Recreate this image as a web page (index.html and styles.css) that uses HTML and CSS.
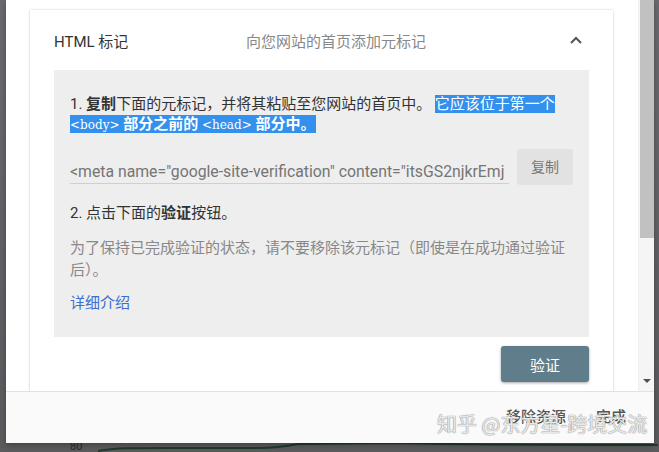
FILE: index.html
```html
<!DOCTYPE html>
<html lang="zh-CN">
<head>
<meta charset="utf-8">
<title>HTML 标记</title>
<link rel="stylesheet" href="styles.css">
</head>
<body>
<div class="backdrop">
  <span class="axis-label">80</span>
  <svg class="chart-line" width="560" height="10" viewBox="0 0 560 10">
    <path d="M0 9 C20 5 40 6 130 6 L160 6 C180 6 190 4 200 2 L300 1 C340 2 400 3 560 3" fill="none" stroke="#1f3b2b" stroke-width="2"/>
  </svg>
</div>

<div class="dialog">
  <div class="scroll-area">
    <div class="scroll-content">
      <section class="card">
        <header class="card-header">
          <span class="card-title">HTML 标记</span>
          <span class="card-desc">向您网站的首页添加元标记</span>
          <svg class="chevron" width="14" height="10" viewBox="0 0 14 10">
            <polyline points="2,8 7,3 12,8" fill="none" stroke="#555" stroke-width="2"/>
          </svg>
        </header>
        <div class="card-body">
          <div class="steps">
            <p class="step">1. <b>复制</b>下面的元标记，并将其粘贴至您网站的首页中。 <span class="sel">它应该位于第一个 <code>&lt;body&gt;</code> <b>部分之前的</b> <code>&lt;head&gt;</code> <b>部分中。</b></span></p>
            <div class="meta-row">
              <div class="meta-field">&lt;meta name="google-site-verification" content="itsGS2njkrEmj</div>
              <button class="copy-btn">复制</button>
            </div>
            <p class="step step-2">2. 点击下面的<b>验证</b>按钮。</p>
            <p class="note">为了保持已完成验证的状态，请不要移除该元标记（即使是在成功通过验证后）。</p>
            <a class="more" href="#">详细介绍</a>
          </div>
          <div class="actions">
            <button class="verify-btn">验证</button>
          </div>
        </div>
      </section>
    </div>
    <div class="scrollbar">
      <div class="thumb"></div>
      <div class="track"></div>
      <svg class="arrow" width="8" height="5" viewBox="0 0 8 5"><polygon points="0,0 8,0 4,4" fill="#505050"/></svg>
    </div>
  </div>
  <footer class="footer">
    <button class="text-btn">移除资源</button>
    <button class="text-btn">完成</button>
  </footer>
  <div class="watermark">知乎 @东方星-跨境交流</div>
</div>
</body>
</html>
```

FILE: styles.css
```css
* { box-sizing: border-box; }
html, body { margin: 0; padding: 0; }
body {
  width: 659px;
  height: 452px;
  overflow: hidden;
  background: #66666b;
  font-family: Roboto, "Noto Sans CJK SC", sans-serif;
  position: relative;
}

.backdrop {
  height: 452px;
  background: linear-gradient(#6a6a70, #5b5b5e);
}
.axis-label {
  position: absolute;
  left: 70px;
  top: 441px;
  font-size: 11px;
  line-height: 11px;
  color: #2a2a2a;
}
.chart-line {
  position: absolute;
  left: 98px;
  top: 442px;
}

.dialog {
  position: absolute;
  left: 6px;
  top: 0;
  width: 648px;
  height: 443px;
  background: #fff;
  display: flex;
  flex-direction: column;
  box-shadow: 0 2px 6px rgba(0,0,0,.3);
}

.scroll-area {
  display: flex;
  height: 392px;
  border-bottom: 1px solid #e2e2e2;
}
.scroll-content {
  flex: 1;
  overflow: hidden;
  padding: 10px 25px 0 24px;
}
.card {
  background: #fff;
  box-shadow: 0 0 2px rgba(0,0,0,.18), 0 1px 3px rgba(0,0,0,.08);
  height: 420px;
}
.card-header {
  height: 60px;
  display: flex;
  align-items: center;
  padding: 0 30px 0 24px;
  font-size: 15px;
}
.card-title {
  width: 192px;
  color: #333;
}
.card-desc {
  flex: 1;
  color: #888;
}
.chevron { display: block; }

.card-body {
  padding: 0 24px;
}
.steps {
  background: #eeeeee;
  padding: 24px 16px 24px 16px;
  height: 267px;
  font-size: 15px;
  color: #333;
}
.step {
  margin: 0;
  line-height: 20px;
}
.step b { font-weight: 700; }
.sel {
  background: #3390ec;
  color: #fff;
}
.sel b { font-weight: 700; }
code {
  font-family: "DejaVu Serif", serif;
  font-size: 12px;
  font-weight: 400;
}

.meta-row {
  display: flex;
  gap: 8px;
  margin-top: 14px;
  height: 36px;
}
.meta-field {
  flex: 1;
  height: 35px;
  padding-top: 12px;
  line-height: 22px;
  border-bottom: 1px solid #cfcfcf;
  color: #757575;
  white-space: nowrap;
  overflow: hidden;
  font-size: 15.8px;
}
.copy-btn {
  width: 56px;
  border: none;
  border-radius: 3px;
  background: #e2e2e2;
  color: #777;
  font: 14px "Noto Sans CJK SC", sans-serif;
  padding: 0 0 3px;
}
.step-2 { margin-top: 18px; }
.note {
  margin: 14px 0 0;
  line-height: 22px;
  color: #888;
  padding-right: 6px;
}
.more {
  display: block;
  margin-top: 12px;
  line-height: 20px;
  color: #3b6fcf;
  text-decoration: none;
}

.actions {
  display: flex;
  justify-content: flex-end;
  padding-top: 9px;
}
.verify-btn {
  width: 88px;
  height: 36px;
  border: none;
  border-radius: 3px;
  background: #607d8b;
  color: #fff;
  font: 15px "Noto Sans CJK SC", sans-serif;
  box-shadow: 0 1px 3px rgba(0,0,0,.35);
}

.scrollbar {
  width: 16px;
  display: flex;
  flex-direction: column;
  align-items: center;
  background: #f5f5f5;
  border-left: 1px solid #f0f0f0;
  padding-bottom: 7px;
}
.thumb {
  width: 14px;
  height: 238px;
  background: #c1c1c1;
}
.track { flex: 1; }
.arrow { display: block; }

.footer {
  flex: 1;
  background: #fafafa;
  display: flex;
  justify-content: flex-end;
  align-items: center;
  gap: 30px;
  padding: 0 28px 4px 0;
}
.text-btn {
  border: none;
  background: none;
  padding: 0;
  font: 500 15px "Noto Sans CJK SC", sans-serif;
  color: #555;
}

.watermark {
  position: absolute;
  left: 431px;
  top: 409px;
  font: 20px "Noto Sans CJK SC", sans-serif;
  color: rgba(250,250,250,.85);
  text-shadow: 0 0 1px #8a8a8a, 0 0 1px #8a8a8a;
  white-space: nowrap;
}
```
